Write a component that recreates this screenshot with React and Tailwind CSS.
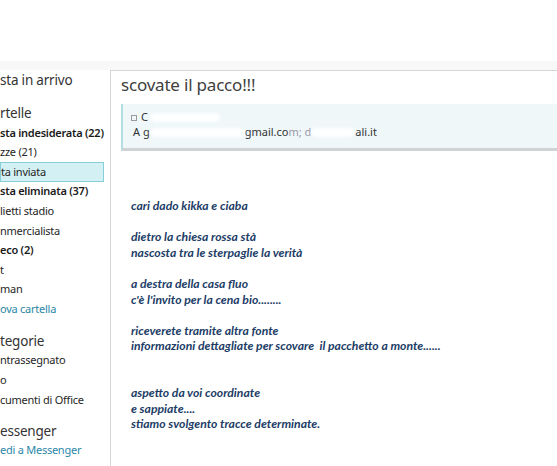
import React from 'react';

const ui = "font-['Segoe_UI','Noto_Sans',sans-serif]";

// sidebar rows, already cut at the left edge like the screenshot
const folders = [
  { t: 'sta indesiderata (22)', b: true },
  { t: 'zze (21)' },
  { t: 'ta inviata', sel: true },
  { t: 'sta eliminata (37)', b: true },
  { t: 'lietti stadio' },
  { t: 'nmercialista' },
  { t: 'eco (2)', b: true },
  { t: 't' },
  { t: 'man' },
  { t: 'ova cartella', link: true },
];

const categories = [{ t: 'ntrassegnato' }, { t: 'o' }, { t: 'cumenti di Office' }];

const body = [
  'cari dado kikka e ciaba',
  '',
  'dietro la chiesa rossa stà',
  'nascosta tra le sterpaglie la verità',
  '',
  'a destra della casa fluo',
  "c'è l'invito per la cena bio........",
  '',
  'riceverete tramite altra fonte',
  'informazioni dettagliate per scovare  il pacchetto a monte......',
  '',
  '',
  'aspetto da voi coordinate',
  'e sappiate....',
  'stiamo svolgento tracce determinate.',
];

function Row({ item }) {
  let color = 'text-[#262626]';
  if (item.link) color = 'text-[#2b87a8]';
  if (item.b) color = 'text-[#1a1a1a] font-semibold tracking-[-0.4px]';
  return (
    <div
      className={
        'h-[19.6px] flex items-center text-[11px] tracking-[-0.25px] whitespace-pre ' +
        color +
        (item.sel ? ' bg-[#d3f1f4] border border-[#86cfd8] w-[104px]' : '')
      }
    >
      {item.t}
    </div>
  );
}

function Heading({ children, h = 'h-[20px]' }) {
  return <div className={`${h} mt-[12px] flex items-center text-[13.5px] tracking-[-0.2px] text-[#333]`}>{children}</div>;
}

function Blob({ w }) {
  return <span className={`inline-block h-[9px] rounded-full bg-white/90 blur-[1.5px] align-middle ${w}`} />;
}

export default function App() {
  return (
    <div className={`w-[557px] h-[466px] bg-white overflow-hidden flex flex-col ${ui}`}>
      <div className="h-[61px] shrink-0" />
      <div className="h-[9px] shrink-0 bg-[#f8f8f8]" />
      <div className="flex flex-1 min-h-0">
        <aside className="w-[110px] shrink-0 overflow-hidden">
          <div className="h-[21px] flex items-center text-[13.5px] tracking-[-0.2px] text-[#333] whitespace-pre">sta in arrivo</div>
          <Heading>rtelle</Heading>
          {folders.map((f) => (
            <Row key={f.t} item={f} />
          ))}
          <Heading>tegorie</Heading>
          {categories.map((f) => (
            <Row key={f.t} item={f} />
          ))}
          <Heading h="h-[19px]">essenger</Heading>
          <Row item={{ t: 'edi a Messenger', link: true }} />
        </aside>

        <main className="flex-1 border-l border-t border-[#d6d6d6] min-w-0">
          <h1 className="h-[24px] mt-[2px] pl-[10px] flex items-center text-[17px] tracking-[-0.2px] text-[#404040] font-normal">
            scovate il pacco!!!
          </h1>

          <div className="ml-[10px] mt-[7px] h-[47px] bg-[#eff7f9] border-l-2 border-[#b3dde2] border-b-[3px] border-b-[#cfd3d4] pl-[8px] pt-[6px] text-[11px] text-[#333] whitespace-pre">
            <div className="h-[15px] flex items-center">
              <span className="w-[6px] h-[6px] border border-[#9a9a9a] mr-[4px]" />
              <span>C</span>
              <Blob w="w-[70px] ml-[2px]" />
            </div>
            <div className="h-[15px] flex items-center pl-[2px]">
              <span>A g</span>
              <Blob w="w-[95px]" />
              <span>gmail.co</span>
              <span className="text-[#99a]">m; d</span>
              <Blob w="w-[44px]" />
              <span>ali.it</span>
            </div>
          </div>

          <div className="pt-[47px] pl-[20px] font-['Lato','Noto_Sans',sans-serif] italic font-bold text-[12.2px] leading-[15.6px] text-[#213c66] whitespace-pre">
            {body.map((l, i) => (
              <div key={i} className="h-[15.6px]">
                {l}
              </div>
            ))}
          </div>
        </main>
      </div>
    </div>
  );
}
